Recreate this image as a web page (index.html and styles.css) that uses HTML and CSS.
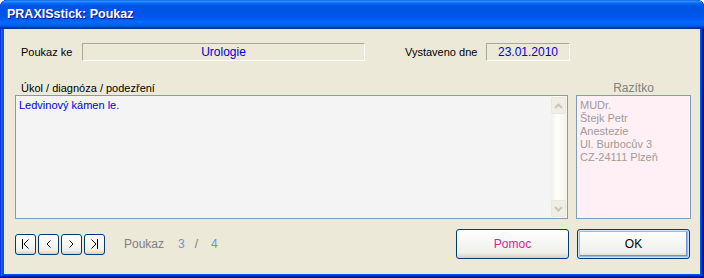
FILE: index.html
```html
<!DOCTYPE html>
<html lang="cs">
<head>
    <meta charset="UTF-8">
    <title>PRAXISstick: Poukaz</title>
    <link rel="stylesheet" href="styles.css">
</head>
<body>
    <div class="window">
        <!-- Title bar -->
        <div class="title-bar">PRAXISstick: Poukaz</div>

        <div class="client">
            <!-- Header fields -->
            <div class="field-row">
                <span class="label label-to">Poukaz ke</span>
                <div class="field field-to">Urologie</div>
                <span class="label label-date">Vystaveno dne</span>
                <div class="field field-date">23.01.2010</div>
            </div>

            <div class="caption-row">
                <span class="caption">Úkol / diagnóza / podezření</span>
                <span class="caption-stamp">Razítko</span>
            </div>

            <!-- Note + stamp -->
            <div class="main-row">
                <div class="memo">
                    <div class="memo-text">Ledvinový kámen le.</div>
                    <div class="scrollbar">
                        <div class="scroll-btn">
                            <svg width="9" height="6" viewBox="0 0 9 6"><polyline points="1,5 4.5,1.5 8,5" fill="none" stroke="#c8c6bb" stroke-width="2"/></svg>
                        </div>
                        <div class="scroll-btn">
                            <svg width="9" height="6" viewBox="0 0 9 6"><polyline points="1,1 4.5,4.5 8,1" fill="none" stroke="#c8c6bb" stroke-width="2"/></svg>
                        </div>
                    </div>
                </div>
                <div class="stamp">
                    MUDr.<br>
                    Štejk Petr<br>
                    Anestezie<br>
                    Ul. Burbocův 3<br>
                    CZ-24111 Plzeň
                </div>
            </div>

            <!-- Navigation and actions -->
            <div class="bottom-row">
                <div class="nav">
                    <button class="nav-btn">
                        <svg width="11" height="12" viewBox="0 0 11 12"><path d="M2.5 1v10M8.5 1.5l-4.5 4.5 4.5 4.5" fill="none" stroke="#000" stroke-width="1"/></svg>
                    </button>
                    <button class="nav-btn">
                        <svg width="11" height="12" viewBox="0 0 11 12"><path d="M7.5 2.5l-3.5 3.5 3.5 3.5" fill="none" stroke="#000" stroke-width="1"/></svg>
                    </button>
                    <button class="nav-btn">
                        <svg width="11" height="12" viewBox="0 0 11 12"><path d="M3.5 2.5l3.5 3.5-3.5 3.5" fill="none" stroke="#000" stroke-width="1"/></svg>
                    </button>
                    <button class="nav-btn">
                        <svg width="11" height="12" viewBox="0 0 11 12"><path d="M2.5 1.5l4.5 4.5-4.5 4.5M8.5 1v10" fill="none" stroke="#000" stroke-width="1"/></svg>
                    </button>
                </div>
                <span class="counter-label">Poukaz</span>
                <span class="counter-num">3</span>
                <span class="counter-sep">/</span>
                <span class="counter-num">4</span>

                <button class="btn btn-help">Pomoc</button>
                <button class="btn btn-ok">OK</button>
            </div>
        </div>
    </div>
</body>
</html>
```

FILE: styles.css
```css
/* Global */
body {
    margin: 0;
    font-family: 'Liberation Sans', Arial, sans-serif;
    font-size: 11px;
    background-color: #fff;
}

/* Window frame */
.window {
    width: 704px;
    height: 278px;
    box-sizing: border-box;
    background-color: #0055ea;
    border-radius: 7px 7px 0 0;
    box-shadow: inset -1px -1px #00138c, inset 1px 1px #0831d9,
                inset -2px -2px #001ea0, inset 2px 2px #166aee,
                inset -3px -3px #003bda, inset 3px 3px #0855dd;
    display: flex;
    flex-direction: column;
    overflow: hidden;
}

.title-bar {
    height: 29px;
    flex-shrink: 0;
    box-sizing: border-box;
    padding: 7px 0 0 7px;
    border-radius: 7px 7px 0 0;
    background: linear-gradient(to bottom, #0058ee 0%, #3593ff 4%, #288eff 6%, #127dff 8%, #036ffc 10%, #0262ee 14%, #0057e5 20%, #0054e3 24%, #0055eb 56%, #005bf5 66%, #026afe 76%, #0062ef 86%, #0052d6 92%, #0040ab 94%, #003092 100%);
    color: #fff;
    font-weight: bold;
    font-size: 12.5px;
    text-shadow: 1px 1px #0f1089;
}

.client {
    flex: 1;
    margin: 0 4px 4px 4px;
    background-color: #ece9d8;
    padding: 14px 9px 0 11px;
    display: flex;
    flex-direction: column;
}

/* Header fields */
.field-row {
    display: flex;
    align-items: center;
    height: 18px;
}

.label {
    color: #000;
    flex-shrink: 0;
    white-space: nowrap;
}

.label-to {
    width: 67px;
    padding-left: 6px;
    box-sizing: border-box;
}

.label-date {
    margin-left: 40px;
    width: 81px;
}

.field {
    flex-shrink: 0;
    height: 18px;
    box-sizing: border-box;
    border-top: 1px solid #aca899;
    border-left: 1px solid #aca899;
    border-right: 1px solid #fff;
    border-bottom: 1px solid #fff;
    color: #0000e0;
    text-align: center;
    line-height: 16px;
    font-size: 12px;
}

.field-to {
    width: 283px;
}

.field-date {
    width: 84px;
}

.caption-row {
    display: flex;
    margin-top: 20px;
    height: 14px;
    line-height: 14px;
}

.caption {
    padding-left: 6px;
    width: 561px;
    box-sizing: border-box;
}

.caption-stamp {
    width: 115px;
    text-align: center;
    color: #808080;
    font-size: 12px;
}

/* Note area and stamp */
.main-row {
    display: flex;
    gap: 8px;
    height: 124px;
}

.memo {
    width: 553px;
    flex-shrink: 0;
    border: 1px solid #7f9db9;
    background-color: #f4f4f4;
    display: flex;
    box-sizing: border-box;
}

.memo-text {
    flex: 1;
    padding: 3px 3px;
    color: #0000e0;
}

.scrollbar {
    width: 16px;
    padding: 1px 0;
    background: linear-gradient(to right, #f3f1ec, #fefefb 40%, #f4f2ea);
    display: flex;
    flex-direction: column;
    justify-content: space-between;
}

.scroll-btn {
    height: 15px;
    margin: 0 1px 0 0;
    border: 1px solid #e8e6de;
    border-radius: 2px;
    background-color: #f1efe5;
    display: flex;
    align-items: center;
    justify-content: center;
}

.stamp {
    width: 115px;
    flex-shrink: 0;
    border: 1px solid #7f9db9;
    box-sizing: border-box;
    background-color: #fff0f5;
    color: #a09c98;
    padding: 3px 3px;
    line-height: 13px;
}

/* Bottom row */
.bottom-row {
    display: flex;
    align-items: center;
    margin-top: 10px;
    height: 30px;
}

.nav {
    display: flex;
    gap: 2px;
}

.nav-btn {
    width: 21px;
    height: 21px;
    padding: 0;
    border: 1px solid #003c74;
    border-radius: 3px;
    background: linear-gradient(to bottom, #fff, #f0f0ea 80%, #d6d0c5);
    display: flex;
    align-items: center;
    justify-content: center;
}

.counter-label {
    margin-left: 19px;
    color: #7f7f7f;
    width: 54px;
    font-size: 12px;
}

.counter-num {
    color: #6d8fe8;
    font-size: 12px;
}

.counter-sep {
    color: #7f7f7f;
    margin: 0 13px 0 10px;
    font-size: 12px;
}

.btn {
    width: 113px;
    height: 30px;
    border: 1px solid #003c74;
    border-radius: 3px;
    background: linear-gradient(to bottom, #fff, #f0f0ea 80%, #d6d0c5);
    font-family: 'Liberation Sans', Arial, sans-serif;
    font-size: 12px;
}

.btn-help {
    margin-left: auto;
    color: #e0209a;
}

.btn-ok {
    margin-left: 8px;
    margin-right: 1px;
    color: #000;
    box-shadow: inset 0 0 0 1px #cee7ff, inset 0 0 0 2px #98b8ea, inset -1px -1px 0 2px #6a8fe0;
}
```
